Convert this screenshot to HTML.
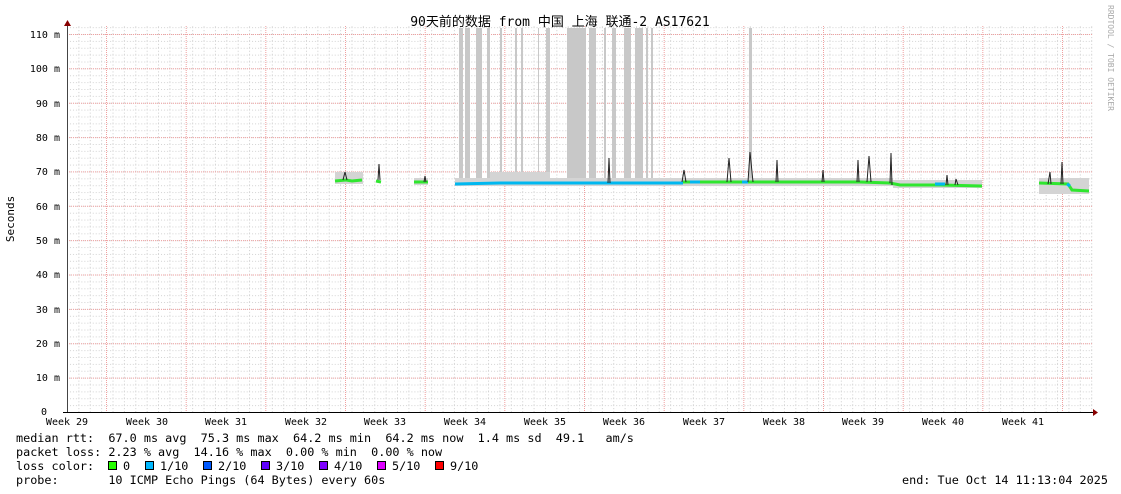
<!DOCTYPE html>
<html><head><meta charset="utf-8"><style>
html,body{margin:0;padding:0;background:#fff;width:1121px;height:494px;overflow:hidden}
svg{display:block}
text{font-family:"DejaVu Sans Mono","Liberation Mono","Noto Sans CJK SC",monospace;fill:#000;white-space:pre}
</style></head><body>
<svg width="1121" height="494" viewBox="0 0 1121 494" xmlns="http://www.w3.org/2000/svg">
<defs>
<pattern id="g" patternUnits="userSpaceOnUse" x="67" y="412" width="11.38" height="6.872">
<line x1="0.5" y1="0" x2="0.5" y2="6.872" stroke="#d2d2d2" stroke-width="1" stroke-dasharray="1,2"/>
<line x1="0" y1="0.5" x2="11.38" y2="0.5" stroke="#d2d2d2" stroke-width="1" stroke-dasharray="1,2"/>
</pattern>
</defs>
<rect x="67" y="26" width="1026" height="386" fill="url(#g)"/>
<g stroke="#f0a0a0" stroke-width="1" stroke-dasharray="1,1">
<line x1="67" y1="34.5" x2="1093" y2="34.5"/><line x1="67" y1="68.8" x2="1093" y2="68.8"/><line x1="67" y1="103.2" x2="1093" y2="103.2"/><line x1="67" y1="137.6" x2="1093" y2="137.6"/><line x1="67" y1="171.9" x2="1093" y2="171.9"/><line x1="67" y1="206.3" x2="1093" y2="206.3"/><line x1="67" y1="240.6" x2="1093" y2="240.6"/><line x1="67" y1="275" x2="1093" y2="275"/><line x1="67" y1="309.4" x2="1093" y2="309.4"/><line x1="67" y1="343.7" x2="1093" y2="343.7"/><line x1="67" y1="378.1" x2="1093" y2="378.1"/>
<line x1="106.5" y1="26" x2="106.5" y2="412"/><line x1="186.2" y1="26" x2="186.2" y2="412"/><line x1="265.8" y1="26" x2="265.8" y2="412"/><line x1="345.5" y1="26" x2="345.5" y2="412"/><line x1="425.2" y1="26" x2="425.2" y2="412"/><line x1="504.8" y1="26" x2="504.8" y2="412"/><line x1="584.5" y1="26" x2="584.5" y2="412"/><line x1="664.2" y1="26" x2="664.2" y2="412"/><line x1="743.8" y1="26" x2="743.8" y2="412"/><line x1="823.5" y1="26" x2="823.5" y2="412"/><line x1="903.2" y1="26" x2="903.2" y2="412"/><line x1="982.8" y1="26" x2="982.8" y2="412"/><line x1="1062.5" y1="26" x2="1062.5" y2="412"/>
</g>
<g fill="#c8c8c8">
<rect x="459" y="28" width="4" height="156"/><rect x="465" y="28" width="5" height="156"/><rect x="476" y="28" width="6" height="156"/><rect x="487" y="28" width="3" height="156"/><rect x="500" y="28" width="2" height="156"/><rect x="515" y="28" width="2" height="156"/><rect x="521" y="28" width="2" height="156"/><rect x="538" y="28" width="1" height="156"/><rect x="546" y="28" width="4" height="156"/><rect x="567" y="28" width="19" height="156"/><rect x="589" y="28" width="7" height="156"/><rect x="604" y="28" width="2" height="156"/><rect x="612" y="28" width="4" height="156"/><rect x="624" y="28" width="7" height="156"/><rect x="635" y="28" width="8" height="156"/><rect x="646" y="28" width="2" height="156"/><rect x="651" y="28" width="2" height="156"/><rect x="749" y="28" width="3" height="156"/>
</g>
<g fill="#d4d4d4">
<rect x="335" y="172" width="28" height="12"/><rect x="414" y="178" width="14" height="7"/><rect x="490" y="172" width="60" height="13"/><rect x="455" y="178" width="228" height="8"/><rect x="683" y="178" width="210" height="8"/><rect x="893" y="180" width="89" height="8"/><rect x="1039" y="178" width="50" height="16"/>
</g>
<g fill="none" stroke-width="3">
<polyline stroke="#2fe62f" points="335,181 346,180 352,181 362,180"/>
<polyline stroke="#2fe62f" points="376,181 381,182"/>
<polyline stroke="#2fe62f" points="414,182 428,182"/>
<polyline stroke="#00b8f0" points="455,184 500,183 560,183 683,183"/>
<polyline stroke="#2fe62f" points="683,182 725,182 735,182 780,182 860,182 890,183 900,185 940,185 982,186"/>
<polyline stroke="#2fe62f" points="1039,183 1068,184 1072,190 1089,191"/>
</g>
<g fill="none" stroke="#00b8f0" stroke-width="3">
<polyline points="690,182 700,182"/><polyline points="742,182 748,182"/><polyline points="935,184 945,184"/><polyline points="1067,184 1070,186"/>
</g>
<g fill="none" stroke="#222" stroke-width="1">
<polyline points="343,180 345,172 347,180"/><polyline points="378,180 379,164 380,180"/><polyline points="424,182 425,176 426,182"/>
<polyline points="608,183 609,158 610,183"/><polyline points="682,182 684,170 686,182"/><polyline points="727,182 729,158 731,182"/>
<polyline points="748,182 750,152 753,182"/><polyline points="776,182 777,160 778,182"/><polyline points="822,182 823,170 824,182"/>
<polyline points="857,182 858,160 859,182"/><polyline points="867,182 869,156 871,182"/><polyline points="890,183 891,153 892,185"/>
<polyline points="946,185 947,175 948,185"/><polyline points="955,185 956,179 958,185"/><polyline points="1061,184 1062,162 1063,184"/>
<polyline points="1048,184 1050,172 1051,184"/>
</g>
<line x1="67.5" y1="24" x2="67.5" y2="413" stroke="#444"/>
<polygon points="64,26 71,26 67.5,20" fill="#800"/>
<line x1="63" y1="412.5" x2="1093" y2="412.5" stroke="#000"/>
<polygon points="1093,409 1093,416 1098,412.5" fill="#800"/>
<g font-size="10" text-anchor="end">
<text x="60" y="38">110 m</text><text x="60" y="72">100 m</text><text x="60" y="107">90 m</text><text x="60" y="141">80 m</text><text x="60" y="175">70 m</text><text x="60" y="210">60 m</text><text x="60" y="244">50 m</text><text x="60" y="278">40 m</text><text x="60" y="313">30 m</text><text x="60" y="347">20 m</text><text x="60" y="381">10 m</text><text x="47" y="415">0</text>
</g>
<g font-size="10" text-anchor="middle">
<text x="67" y="425">Week 29</text><text x="147" y="425">Week 30</text><text x="226" y="425">Week 31</text><text x="306" y="425">Week 32</text><text x="385" y="425">Week 33</text><text x="465" y="425">Week 34</text><text x="545" y="425">Week 35</text><text x="624" y="425">Week 36</text><text x="704" y="425">Week 37</text><text x="784" y="425">Week 38</text><text x="863" y="425">Week 39</text><text x="943" y="425">Week 40</text><text x="1023" y="425">Week 41</text>
</g>
<text x="14" y="219" font-size="11" transform="rotate(-90 14 219)" text-anchor="middle">Seconds</text>
<text x="560" y="26" font-size="13" text-anchor="middle">90天前的数据 from 中国 上海 联通-2 AS17621</text>
<text x="1108" y="5" font-size="8" style="fill:#aaa" transform="rotate(90 1108 5)">RRDTOOL / TOBI OETIKER</text>
<g font-size="11.8">
<text x="16" y="442">median rtt:  67.0 ms avg  75.3 ms max  64.2 ms min  64.2 ms now  1.4 ms sd  49.1   am/s</text>
<text x="16" y="456">packet loss: 2.23 % avg  14.16 % max  0.00 % min  0.00 % now</text>
<text x="16" y="470">loss color:</text>
<text x="16" y="484">probe:       10 ICMP Echo Pings (64 Bytes) every 60s</text>
<text x="902" y="484">end: Tue Oct 14 11:13:04 2025</text>
<text x="123" y="470">0</text><text x="160" y="470">1/10</text><text x="218" y="470">2/10</text><text x="276" y="470">3/10</text><text x="334" y="470">4/10</text><text x="392" y="470">5/10</text><text x="450" y="470">9/10</text>
</g>
<g stroke="#000" stroke-width="1">
<rect x="108.5" y="461.5" width="8" height="8" fill="#26ff00"/><rect x="145.5" y="461.5" width="8" height="8" fill="#00b8ff"/><rect x="203.5" y="461.5" width="8" height="8" fill="#0059ff"/><rect x="261.5" y="461.5" width="8" height="8" fill="#5e00ff"/><rect x="319.5" y="461.5" width="8" height="8" fill="#7e00ff"/><rect x="377.5" y="461.5" width="8" height="8" fill="#dd00ff"/><rect x="435.5" y="461.5" width="8" height="8" fill="#ff0000"/>
</g>
</svg>
</body></html>
